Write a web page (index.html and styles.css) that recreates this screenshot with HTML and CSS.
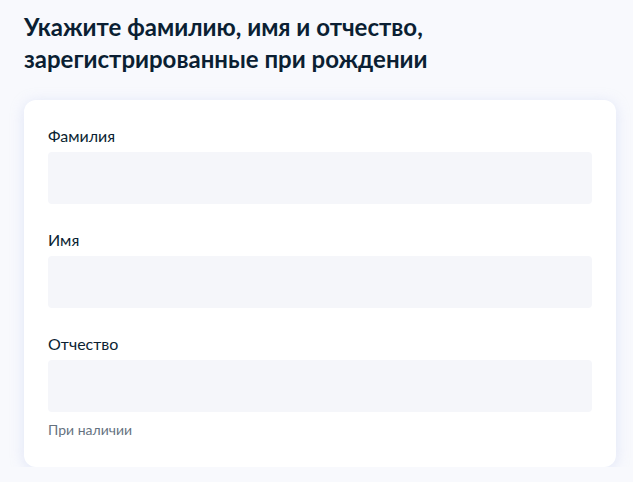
FILE: index.html
```html
<!DOCTYPE html>
<html lang="ru">
<head>
    <meta charset="UTF-8">
    <meta name="viewport" content="width=device-width, initial-scale=1.0">
    <title>ФИО при рождении</title>
    <link rel="stylesheet" href="styles.css">
</head>
<body>
    <div class="page">
        <h1>Укажите фамилию, имя и отчество, зарегистрированные при рождении</h1>

        <form class="card">
            <div class="field">
                <label for="surname">Фамилия</label>
                <input id="surname" type="text">
            </div>
            <div class="field">
                <label for="name">Имя</label>
                <input id="name" type="text">
            </div>
            <div class="field">
                <label for="patronymic">Отчество</label>
                <input id="patronymic" type="text">
                <div class="hint">При наличии</div>
            </div>
        </form>
    </div>
</body>
</html>
```

FILE: styles.css
```css
body {
    margin: 0;
    font-family: Lato, "Noto Sans", sans-serif;
    background: #f8f9fd;
    color: #0b1f33;
}
.page {
    width: 592px;
    padding: 11px 0 0 24px;
}
h1 {
    margin: 0 0 25px;
    font-size: 24px;
    line-height: 32px;
    font-weight: 700;
    width: 440px;
}
.card {
    background: #fff;
    border-radius: 12px;
    box-shadow: 0 2px 14px rgba(178, 192, 235, 0.35);
    padding: 24px 24px 27px;
    display: flex;
    flex-direction: column;
    gap: 24px;
}
.field {
    display: flex;
    flex-direction: column;
}
label {
    font-size: 16px;
    line-height: 24px;
    margin-bottom: 4px;
}
input {
    height: 52px;
    border: none;
    border-radius: 4px;
    background: #f5f6fa;
    padding: 0 16px;
    font: inherit;
    box-sizing: border-box;
}
.hint {
    margin-top: 8px;
    font-size: 14px;
    line-height: 20px;
    color: #66727f;
}
```
